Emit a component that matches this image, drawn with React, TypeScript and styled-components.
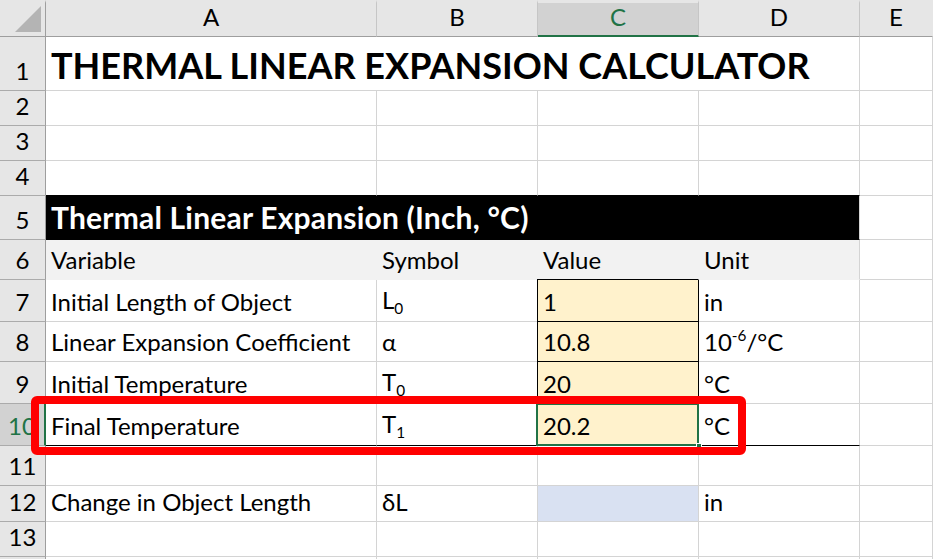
import { FC, ReactNode } from "react";
import styled, { createGlobalStyle, css } from "styled-components";

const GRID = "#d4d4d4";
const HEADER_BG = "#e6e6e6";
const HEADER_EDGE = "#9e9e9e";
const SELECT = "#217346";
const INPUT_FILL = "#fff2cc";
const RESULT_FILL = "#d9e1f2";
const LABEL_FILL = "#f2f2f2";

const columns = ["A", "B", "C", "D", "E"];

type Variable = {
  row: number;
  name: string;
  symbol: ReactNode;
  value: string;
  unit: ReactNode;
  active?: boolean;
};

const App: FC = () => {
  return (
    <>
      <GlobalStyle />
      <Sheet>
        <Corner>
          <svg width="27" height="27" viewBox="0 0 27 27">
            <polygon points="26,0 26,26 0,26" fill="#b4b4b4" />
          </svg>
        </Corner>
        {columns.map((c) => (
          <ColHeader key={c} $selected={c === "C"} $last={c === "E"}>
            {c}
          </ColHeader>
        ))}

        <RowHeader>1</RowHeader>
        <Cell $span={4} $size={36} $bold $pad={3}>
          <Text>THERMAL LINEAR EXPANSION CALCULATOR</Text>
        </Cell>
        <Cell />

        {[2, 3, 4].map((r) => (
          <Row key={r} n={r} bottom={r === 4 ? "#000" : undefined} />
        ))}

        <RowHeader>5</RowHeader>
        <Cell $span={4} $fill="#000" $bottom="#000" $color="#fff" $size={30} $bold $pad={4}>
          <Text $spacing={0.2}>Thermal Linear Expansion (Inch, °C)</Text>
        </Cell>
        <Cell />

        <RowHeader>6</RowHeader>
        <Cell $fill={LABEL_FILL} $right={LABEL_FILL} $bottom={LABEL_FILL}>
          <Text>Variable</Text>
        </Cell>
        <Cell $fill={LABEL_FILL} $right={LABEL_FILL} $bottom={LABEL_FILL}>
          <Text>Symbol</Text>
        </Cell>
        <Cell $fill={LABEL_FILL} $right={LABEL_FILL} $bottom="#000">
          <Text>Value</Text>
        </Cell>
        <Cell $fill={LABEL_FILL} $bottom={LABEL_FILL}>
          <Text>Unit</Text>
        </Cell>
        <Cell />

        {getVariables().map((v) => {
          const edge = v.active ? "#000" : undefined;
          return (
            <Group key={v.row}>
              <RowHeader $selected={v.active}>{v.row}</RowHeader>
              <Cell $bottom={edge}>
                <Text>{v.name}</Text>
              </Cell>
              <Cell $bottom={edge}>
                <Text>{v.symbol}</Text>
              </Cell>
              <Cell $fill={INPUT_FILL} $right="#000" $bottom="#000" $boxed $active={v.active}>
                <Text>{v.value}</Text>
              </Cell>
              <Cell $bottom={edge}>
                <Text>{v.unit}</Text>
              </Cell>
              <Cell />
            </Group>
          );
        })}

        <Row n={11} />

        <RowHeader>12</RowHeader>
        <Cell>
          <Text>Change in Object Length</Text>
        </Cell>
        <Cell>
          <Text>δL</Text>
        </Cell>
        <Cell $fill={RESULT_FILL} />
        <Cell>
          <Text>in</Text>
        </Cell>
        <Cell />

        <Row n={13} />
        <Row />

        <Highlight />
      </Sheet>
    </>
  );
};

export default App;

const Group: FC<{ children: ReactNode }> = ({ children }) => <>{children}</>;

const Row: FC<{ n?: number; bottom?: string }> = ({ n, bottom }) => (
  <>
    <RowHeader>{n}</RowHeader>
    <Cell $bottom={bottom} />
    <Cell $bottom={bottom} />
    <Cell $bottom={bottom} />
    <Cell $bottom={bottom} />
    <Cell />
  </>
);

const GlobalStyle = createGlobalStyle`
  html, body {
    margin: 0;
    padding: 0;
    background: #fff;
    overflow: hidden;
  }
  body {
    font-family: Lato, "Noto Sans", sans-serif;
    color: #000;
  }
`;

const Sheet = styled.div`
  position: relative;
  display: grid;
  width: 933px;
  height: 559px;
  overflow: hidden;
  grid-template-columns: 46px 331px 161px 161px 161px 1fr;
  grid-template-rows: 37px 54px 35px 35px 35px 44px 40px 42px 40px 42px 42px 40px 36px 35px 1fr;
`;

const Corner = styled.div`
  box-sizing: border-box;
  display: flex;
  align-items: flex-end;
  justify-content: flex-end;
  padding: 0 3px 3px 0;
  background: ${HEADER_BG};
  border-top: 3px solid ${HEADER_BG};
  border-right: 1px solid ${HEADER_EDGE};
  border-bottom: 1px solid ${HEADER_EDGE};
`;

const ColHeader = styled.div<{ $selected?: boolean; $last?: boolean }>`
  box-sizing: border-box;
  display: flex;
  align-items: flex-end;
  justify-content: center;
  padding-bottom: ${(p) => (p.$selected ? 3 : 4)}px;
  font-size: 24px;
  line-height: 1.2;
  background: ${(p) => (p.$selected ? "#d2d2d2" : HEADER_BG)};
  color: ${(p) => (p.$selected ? SELECT : "#000")};
  border-top: 3px solid ${HEADER_BG};
  border-right: 1px solid ${(p) => (p.$last ? HEADER_BG : "#c6c6c6")};
  border-bottom: ${(p) => (p.$selected ? `2px solid ${SELECT}` : `1px solid ${HEADER_EDGE}`)};
`;

const RowHeader = styled.div<{ $selected?: boolean }>`
  box-sizing: border-box;
  display: flex;
  align-items: flex-end;
  justify-content: center;
  padding-bottom: 4px;
  font-size: 24px;
  line-height: 1.2;
  background: ${(p) => (p.$selected ? "#d2d2d2" : HEADER_BG)};
  color: ${(p) => (p.$selected ? SELECT : "#000")};
  border-right: ${(p) => (p.$selected ? `2px solid ${SELECT}` : `1px solid ${HEADER_EDGE}`)};
  border-bottom: 1px solid #ababab;
`;

type CellProps = {
  $fill?: string;
  $right?: string;
  $bottom?: string;
  $span?: number;
  $boxed?: boolean;
  $active?: boolean;
  $size?: number;
  $bold?: boolean;
  $color?: string;
  $pad?: number;
};

const Cell = styled.div<CellProps>`
  box-sizing: border-box;
  display: flex;
  align-items: flex-end;
  min-width: 0;
  padding: 0 0 ${(p) => p.$pad ?? 4}px 5px;
  grid-column: span ${(p) => p.$span ?? 1};
  background: ${(p) => p.$fill ?? "#fff"};
  border-right: 1px solid ${(p) => p.$right ?? GRID};
  border-bottom: 1px solid ${(p) => p.$bottom ?? GRID};
  font-size: ${(p) => p.$size ?? 24}px;
  font-weight: ${(p) => (p.$bold ? 700 : 400)};
  color: ${(p) => p.$color ?? "#000"};
  line-height: 1.2;

  ${(p) =>
    p.$boxed &&
    css`
      box-shadow: -1px -1px 0 0 #000;
    `}

  ${(p) =>
    p.$active &&
    css`
      position: relative;
      z-index: 1;
      &::before {
        content: "";
        position: absolute;
        left: -2px;
        top: -1px;
        right: -1px;
        bottom: -1px;
        border: 2px solid ${SELECT};
      }
      &::after {
        content: "";
        position: absolute;
        right: -4px;
        bottom: -4px;
        width: 6px;
        height: 6px;
        background: ${SELECT};
        border: 1px solid #fff;
        box-sizing: border-box;
      }
    `}
`;

const Text = styled.span<{ $spacing?: number }>`
  display: block;
  white-space: nowrap;
  letter-spacing: ${(p) => p.$spacing ?? 0}px;
`;

const Sub = styled.sub`
  font-size: 0.64em;
  line-height: 1.1;
  vertical-align: -0.33em;
`;

const Sup = styled.sup`
  font-size: 0.64em;
  line-height: 0;
  vertical-align: 0.68em;
`;

const Highlight = styled.div`
  position: absolute;
  left: 31px;
  top: 396px;
  width: 715px;
  height: 59px;
  box-sizing: border-box;
  border: 8px solid #ff0000;
  border-radius: 6px;
  pointer-events: none;
  z-index: 2;
`;

function getVariables(): Variable[] {
  return [
    { row: 7, name: "Initial Length of Object", symbol: <>L<Sub>0</Sub></>, value: "1", unit: "in" },
    { row: 8, name: "Linear Expansion Coefficient", symbol: "α", value: "10.8", unit: <>10<Sup>-6</Sup>/°C</> },
    { row: 9, name: "Initial Temperature", symbol: <>T<Sub>0</Sub></>, value: "20", unit: "°C" },
    { row: 10, name: "Final Temperature", symbol: <>T<Sub>1</Sub></>, value: "20.2", unit: "°C", active: true },
  ];
}
